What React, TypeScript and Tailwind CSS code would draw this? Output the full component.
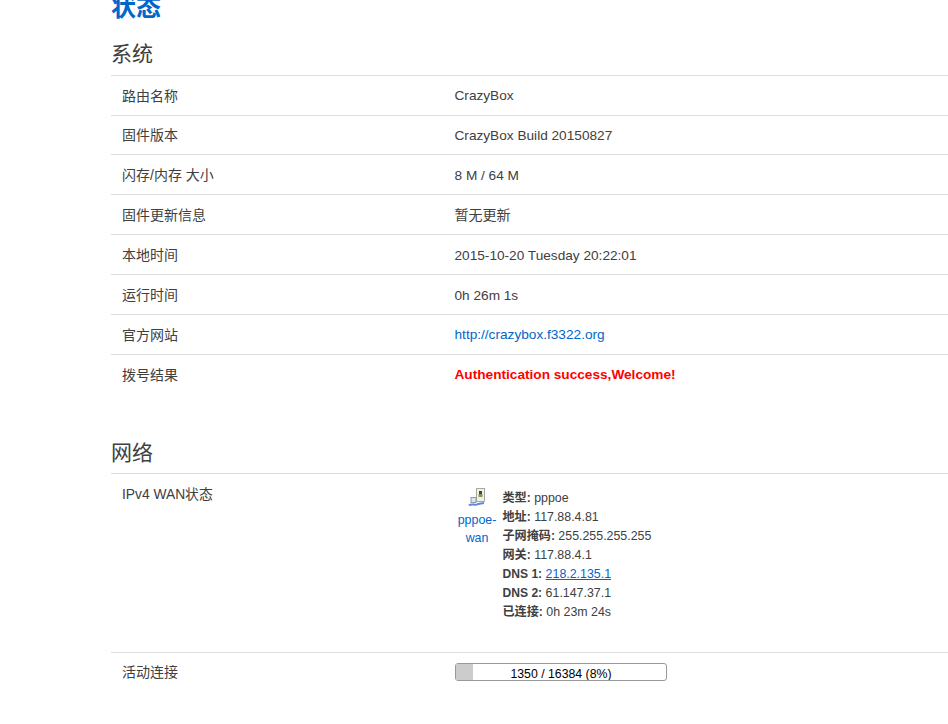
const FONT = "font-['Liberation_Sans','Noto_Sans_CJK_SC',sans-serif]";

const LINK = "text-[#0066cc]";

const SYSTEM_ROWS: Array<[string, React.ReactNode]> = [
  ["路由名称", "CrazyBox"],
  ["固件版本", "CrazyBox Build 20150827"],
  ["闪存/内存 大小", "8 M / 64 M"],
  ["固件更新信息", <span className="-mt-[1.6px] block text-[14px]">暂无更新</span>],
  ["本地时间", "2015-10-20 Tuesday 20:22:01"],
  ["运行时间", "0h 26m 1s"],
  ["官方网站", <a href="#" className={LINK}>http://crazybox.f3322.org</a>],
  ["拨号结果", <span className="font-bold text-[#ff0000]">Authentication success,Welcome!</span>],
];

const WAN_INFO: Array<[string, React.ReactNode]> = [
  ["类型:", "pppoe"],
  ["地址:", "117.88.4.81"],
  ["子网掩码:", "255.255.255.255"],
  ["网关:", "117.88.4.1"],
  ["DNS 1:", <a href="#" className={`${LINK} underline`}>218.2.135.1</a>],
  ["DNS 2:", "61.147.37.1"],
  ["已连接:", "0h 23m 24s"],
];

function WanIcon() {
  return (
    <svg width="20" height="20" viewBox="0 0 20 20" className="block" aria-hidden="true">
      <rect x="9.5" y="0.5" width="8" height="13" fill="#f1efe6" stroke="#a8a89e" />
      <rect x="12" y="3" width="3" height="3" fill="#2f4a4a" />
      <rect x="11.5" y="6" width="4" height="3" fill="#7f9a5a" />
      <rect x="4" y="9.5" width="5" height="5" fill="#dfe3ea" stroke="#8d97ad" />
      <path d="M2 17.5 C5 14.5 8 18.5 11 16 L17 15" fill="none" stroke="#5b8bd8" strokeWidth="2" />
    </svg>
  );
}

function Row({ label, children }: { label: string; children: React.ReactNode }) {
  return (
    <div className="flex h-[39.86px] items-center border-t border-[#dddddd]">
      <div className="w-[343.5px] shrink-0 pt-[0.8px] pl-[11px] text-[#404040]">{label}</div>
      <div className="pt-[2.4px] text-[13.65px] text-[#404040]">{children}</div>
    </div>
  );
}

export default function App() {
  return (
    <div className={`${FONT} h-[724px] w-[948px] overflow-hidden bg-white pl-[111px] text-[14px] leading-5`}>
      <h2 className="-mt-[6px] h-[26px] text-[25px] leading-[26px] font-bold text-[#0066cc]">状态</h2>

      <h3 className="mt-[19px] h-[35.7px] text-[21px] leading-[30px] font-normal text-[#404040]">系统</h3>
      <div>
        {SYSTEM_ROWS.map(([label, value]) => (
          <Row key={label} label={label}>{value}</Row>
        ))}
      </div>

      <h3 className="mt-[44.6px] h-[35px] text-[21px] leading-[30px] font-normal text-[#404040]">网络</h3>
      <div className="flex h-[179px] border-t border-[#dddddd]">
        <div className="w-[344px] shrink-0 pt-[11px] pl-[11px] text-[13.8px] text-[#404040]">IPv4 WAN状态</div>
        <div className="flex pt-[14px]">
          <div className="flex w-[44px] flex-col items-center text-[12.4px] leading-[18px] text-[#0066cc]">
            <WanIcon />
            <div className="mt-[3px] text-center">pppoe-<br />wan</div>
          </div>
          <div className="ml-[3.5px] pt-[1px] text-[12.4px] leading-[19px] text-[#404040]">
            {WAN_INFO.map(([k, v]) => (
              <div key={k}><strong className="text-[12.1px] font-bold">{k}</strong> {v}</div>
            ))}
          </div>
        </div>
      </div>

      <div className="flex h-[40px] items-start border-t border-[#dddddd]">
        <div className="w-[344px] shrink-0 pt-[9px] pl-[11px] text-[#404040]">活动连接</div>
        <div className="relative mt-[10px] h-[18px] w-[212px] overflow-hidden rounded-[3px] border border-[#999999] bg-white">
          <div className="h-full w-[8%] bg-[#cccccc]" />
          <div className="absolute inset-0 text-center text-[12.3px] leading-[20px] text-[#000000]">1350 / 16384 (8%)</div>
        </div>
      </div>
    </div>
  );
}
